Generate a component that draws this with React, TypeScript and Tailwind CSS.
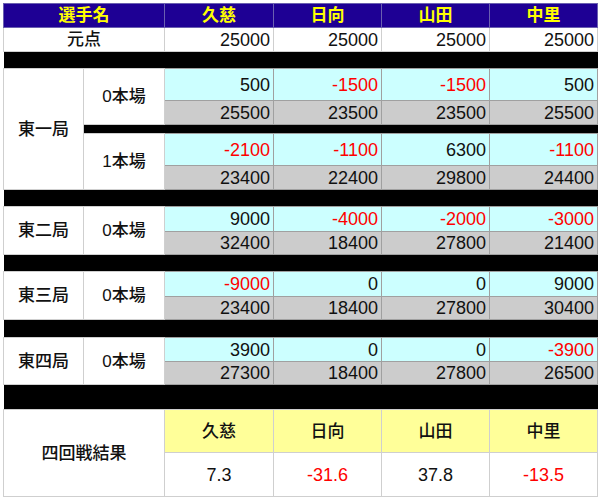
import React from "react";

type Cell = { v: string; red?: boolean };

const players = ["久慈", "日向", "山田", "中里"];

const rounds: {
  name: string;
  hands: { label: string; diff: Cell[]; total: string[]; h1: string; h2: string }[];
}[] = [
  {
    name: "東一局",
    hands: [
      {
        label: "0本場",
        diff: [{ v: "500" }, { v: "-1500", red: true }, { v: "-1500", red: true }, { v: "500" }],
        total: ["25500", "23500", "23500", "25500"],
        h1: "h-[32px]",
        h2: "h-[24px]",
      },
      {
        label: "1本場",
        diff: [{ v: "-2100", red: true }, { v: "-1100", red: true }, { v: "6300" }, { v: "-1100", red: true }],
        total: ["23400", "22400", "29800", "24400"],
        h1: "h-[32px]",
        h2: "h-[24px]",
      },
    ],
  },
  {
    name: "東二局",
    hands: [
      {
        label: "0本場",
        diff: [{ v: "9000" }, { v: "-4000", red: true }, { v: "-2000", red: true }, { v: "-3000", red: true }],
        total: ["32400", "18400", "27800", "21400"],
        h1: "h-[25px]",
        h2: "h-[23px]",
      },
    ],
  },
  {
    name: "東三局",
    hands: [
      {
        label: "0本場",
        diff: [{ v: "-9000", red: true }, { v: "0" }, { v: "0" }, { v: "9000" }],
        total: ["23400", "18400", "27800", "30400"],
        h1: "h-[25px]",
        h2: "h-[23px]",
      },
    ],
  },
  {
    name: "東四局",
    hands: [
      {
        label: "0本場",
        diff: [{ v: "3900" }, { v: "0" }, { v: "0" }, { v: "-3900", red: true }],
        total: ["27300", "18400", "27800", "26500"],
        h1: "h-[24px]",
        h2: "h-[23px]",
      },
    ],
  },
];

const results: Cell[] = [{ v: "7.3" }, { v: "-31.6", red: true }, { v: "37.8" }, { v: "-13.5", red: true }];

const label = "border border-[#cfcfcf] bg-white text-center align-middle text-[17px] font-medium text-[#111] p-0";
const num = "border border-[#a0a0a0] text-right align-middle text-[18px] pr-[3px] py-0";

export default function App() {
  return (
    <div className="bg-white w-[600px] h-[499px] pt-[3px] pl-[3px] leading-none font-['Liberation_Sans','Noto_Sans_CJK_JP',sans-serif]">
      <table className="w-[594px] table-fixed border-collapse leading-none">
        <colgroup>
          <col className="w-[80px]" />
          <col className="w-[81px]" />
          <col className="w-[109px]" />
          <col className="w-[108px]" />
          <col className="w-[108px]" />
          <col className="w-[108px]" />
        </colgroup>
        <tbody>
          <tr className="h-[24px] bg-[#1e0094]">
            <td colSpan={2} className="border border-[#6a5fb0] text-center text-[17px] font-bold text-[#ffff00] p-0">
              選手名
            </td>
            {players.map((p) => (
              <td key={p} className="border border-[#6a5fb0] text-center text-[17px] font-bold text-[#ffff00] p-0">
                {p}
              </td>
            ))}
          </tr>
          <tr className="h-[24px]">
            <td colSpan={2} className={label}>
              元点
            </td>
            {players.map((p) => (
              <td key={p} className="border border-[#cfcfcf] text-right text-[18px] pr-[3px] py-0 text-[#111]">
                25000
              </td>
            ))}
          </tr>
          <tr className="h-[17px]">
            <td colSpan={6} className="bg-black p-0" />
          </tr>

          {rounds.map((r, ri) => (
            <React.Fragment key={r.name}>
              {r.hands.map((h, hi) => (
                <React.Fragment key={h.label + hi}>
                  {hi > 0 && (
                    <tr className="h-[9px]">
                      <td colSpan={5} className="bg-black p-0" />
                    </tr>
                  )}
                  <tr className={h.h1}>
                    {hi === 0 && (
                      <td rowSpan={r.hands.length * 3 - 1} className={label}>
                        {r.name}
                      </td>
                    )}
                    <td rowSpan={2} className={label}>
                      {h.label}
                    </td>
                    {h.diff.map((d, i) => (
                      <td key={i} className={`${num} bg-[#ccffff] ${d.red ? "text-[#ff0000]" : "text-[#111]"}`}>
                        {d.v}
                      </td>
                    ))}
                  </tr>
                  <tr className={h.h2}>
                    {h.total.map((t, i) => (
                      <td key={i} className={`${num} bg-[#cccccc] text-[#111]`}>
                        {t}
                      </td>
                    ))}
                  </tr>
                </React.Fragment>
              ))}
              <tr className={ri === rounds.length - 1 ? "h-[25px]" : ri === 2 ? "h-[18px]" : "h-[17px]"}>
                <td colSpan={6} className="bg-black p-0" />
              </tr>
            </React.Fragment>
          ))}

          <tr className="h-[43px]">
            <td colSpan={2} rowSpan={2} className={label}>
              四回戦結果
            </td>
            {players.map((p) => (
              <td key={p} className="border border-[#cfcfcf] bg-[#ffff99] text-center text-[17px] font-medium text-[#111] p-0">
                {p}
              </td>
            ))}
          </tr>
          <tr className="h-[44px]">
            {results.map((c, i) => (
              <td
                key={i}
                className={`border border-[#cfcfcf] text-center text-[18px] p-0 ${c.red ? "text-[#ff0000]" : "text-[#111]"}`}
              >
                {c.v}
              </td>
            ))}
          </tr>
        </tbody>
      </table>
    </div>
  );
}
